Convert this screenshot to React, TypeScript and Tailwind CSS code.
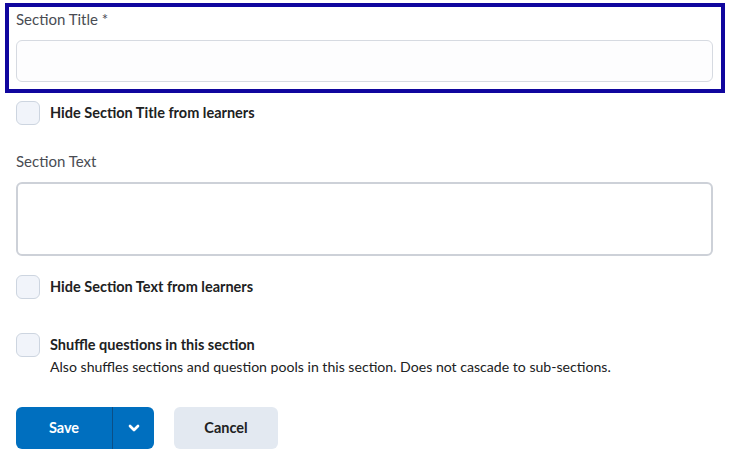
import { ChevronDown } from "lucide-react";

function Checkbox({ label, desc }: { label: string; desc?: string }) {
  return (
    <div className="flex items-start gap-[10px]">
      <span className="mt-[-2px] h-6 w-6 shrink-0 rounded-md border border-[#cdd5e0] bg-[#f1f4fa]" />
      <div className="flex flex-col">
        <span className="text-[14.5px] font-bold leading-5 text-[#202122]">{label}</span>
        {desc && <span className="mt-[2px] text-[14.1px] leading-5 text-[#202122]">{desc}</span>}
      </div>
    </div>
  );
}

export default function App() {
  return (
    <div className="h-[470px] w-[742px] bg-white pt-[3px] pl-[5px] font-['Lato','Noto_Sans',sans-serif]">
      {/* focused field */}
      <div className="w-[720px] border-4 border-[#10069e] pt-[2px] pr-[8px] pb-[7px] pl-[7px]">
        <label className="block text-[15px] leading-5 text-[#494c53]">Section Title *</label>
        <div className="mt-[11px] h-[42px] w-full rounded-md border border-[#d6dae1] bg-[#fdfdfe]" />
      </div>

      <div className="w-[708px] pl-[11px]">
        <div className="mt-[10px]">
          <Checkbox label="Hide Section Title from learners" />
        </div>

        <label className="mt-[26px] block text-[15px] leading-5 text-[#494c53]">Section Text</label>
        <div className="mt-[11px] h-[74px] w-full rounded-md border-2 border-[#cdd1d8] bg-white" />

        <div className="mt-[21px]">
          <Checkbox label="Hide Section Text from learners" />
        </div>

        <div className="mt-[36px]">
          <Checkbox
            label="Shuffle questions in this section"
            desc="Also shuffles sections and question pools in this section. Does not cascade to sub-sections."
          />
        </div>

        <div className="mt-[30px] flex gap-[20px]">
          <div className="flex h-[42px] w-[138px] overflow-hidden rounded-md bg-[#006fbf] text-white">
            <button className="flex w-[96px] items-center justify-center text-[14.5px] font-bold">Save</button>
            <span className="w-px bg-[#0b4f86]" />
            <button className="flex flex-1 items-center justify-center">
              <ChevronDown className="h-[16px] w-[16px]" strokeWidth={4} />
            </button>
          </div>
          <button className="h-[42px] w-[104px] rounded-md bg-[#e3e9f1] text-[14.5px] font-bold text-[#202122]">
            Cancel
          </button>
        </div>
      </div>
    </div>
  );
}
